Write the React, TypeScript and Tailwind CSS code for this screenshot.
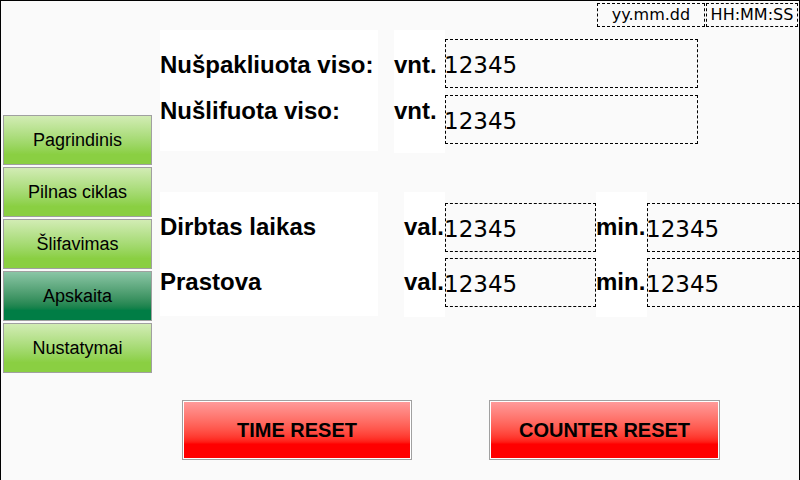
import React from 'react'

const navItems = [
  { label: 'Pagrindinis', active: false },
  { label: 'Pilnas ciklas', active: false },
  { label: 'Šlifavimas', active: false },
  { label: 'Apskaita', active: true },
  { label: 'Nustatymai', active: false },
]

const arial = "font-['Liberation_Sans',Arial,sans-serif]"
const dejavu = "font-['DejaVu_Sans',Verdana,sans-serif]"

function ValueBox({ width, value }: { width: string; value: string }) {
  return (
    <div
      className={`${width} h-[49px] shrink-0 border border-dashed border-black flex items-center pt-[2px] text-[23px] text-black ${dejavu}`}
    >
      <span className="-ml-[2px]">{value}</span>
    </div>
  )
}

function NavButton({ label, active }: { label: string; active: boolean }) {
  return (
    <div className="h-[50px] border border-[#a0a0a0]">
      <div
        className={`h-full flex items-center justify-center text-[18px] text-black ${arial} ${
          active
            ? 'bg-linear-to-b from-[#8ac6a6] to-[#007d45] to-80%'
            : 'bg-linear-to-b from-[#d2ecb4] to-[#8acf42] to-80%'
        }`}
      >
        {label}
      </div>
    </div>
  )
}

function ResetButton({ label, width }: { label: string; width: string }) {
  return (
    <div className={`${width} h-[60px] shrink-0 border border-[#a0a0a0] bg-white p-[1px]`}>
      <div
        className={`h-full flex items-center justify-center bg-linear-to-b from-[#ff9a9a] to-[#ff0000] to-75% text-[20px] font-bold text-black ${arial}`}
      >
        {label}
      </div>
    </div>
  )
}

export default function App() {
  return (
    <div className="w-[800px] h-[480px] bg-[#fafafa] border-l border-t border-r border-black overflow-hidden flex flex-col">
      {/* Date / time */}
      <div className={`h-[27px] shrink-0 flex justify-end items-start gap-[1px] pr-[1px] pt-[2px] text-[16px] text-black ${dejavu}`}>
        <div className="w-[108px] h-[24px] border border-dashed border-black flex items-center justify-center">
          yy.mm.dd
        </div>
        <div className="w-[92px] h-[24px] border border-dashed border-black flex items-center justify-center">
          HH:MM:SS
        </div>
      </div>

      <div className="flex flex-1 min-h-0">
        {/* Side navigation */}
        <div className="ml-[2px] w-[149px] shrink-0 pt-[87px] flex flex-col gap-[2px]">
          {navItems.map((item) => (
            <NavButton key={item.label} label={item.label} active={item.active} />
          ))}
        </div>

        {/* Content */}
        <div className="ml-[8px] flex flex-col shrink-0">
          {/* Counters */}
          <div className={`mt-[2px] flex items-start text-[24px] font-bold text-black leading-[24px] ${arial}`}>
            <div className="w-[218px] h-[121px] shrink-0 bg-white pt-[23px] flex flex-col gap-[22px]">
              <span>Nušpakliuota viso:</span>
              <span>Nušlifuota viso:</span>
            </div>
            <div className="ml-[16px] w-[51px] h-[123px] shrink-0 bg-white pt-[23px] flex flex-col gap-[22px]">
              <span>vnt.</span>
              <span>vnt.</span>
            </div>
            <div className="pt-[9px] flex flex-col gap-[7px] font-normal">
              <ValueBox width="w-[253px]" value="12345" />
              <ValueBox width="w-[253px]" value="12345" />
            </div>
          </div>

          {/* Working time */}
          <div className={`mt-[39px] flex items-start text-[24px] font-bold text-black leading-[24px] ${arial}`}>
            <div className="w-[218px] h-[124px] shrink-0 bg-white pt-[23px] flex flex-col gap-[31px]">
              <span>Dirbtas laikas</span>
              <span>Prastova</span>
            </div>
            <div className="ml-[26px] w-[41px] h-[125px] shrink-0 bg-white pt-[23px] flex flex-col gap-[31px]">
              <span>val.</span>
              <span>val.</span>
            </div>
            <div className="pt-[11px] flex flex-col gap-[6px] font-normal">
              <ValueBox width="w-[151px]" value="12345" />
              <ValueBox width="w-[151px]" value="12345" />
            </div>
            <div className="w-[51px] h-[125px] shrink-0 bg-white pt-[23px] flex flex-col gap-[31px]">
              <span>min.</span>
              <span>min.</span>
            </div>
            <div className="pt-[11px] flex flex-col gap-[6px] font-normal">
              <ValueBox width="w-[153px]" value="12345" />
              <ValueBox width="w-[153px]" value="12345" />
            </div>
          </div>

          {/* Reset buttons */}
          <div className="mt-[83px] ml-[22px] flex gap-[77px]">
            <ResetButton label="TIME RESET" width="w-[230px]" />
            <ResetButton label="COUNTER RESET" width="w-[231px]" />
          </div>
        </div>
      </div>
    </div>
  )
}
